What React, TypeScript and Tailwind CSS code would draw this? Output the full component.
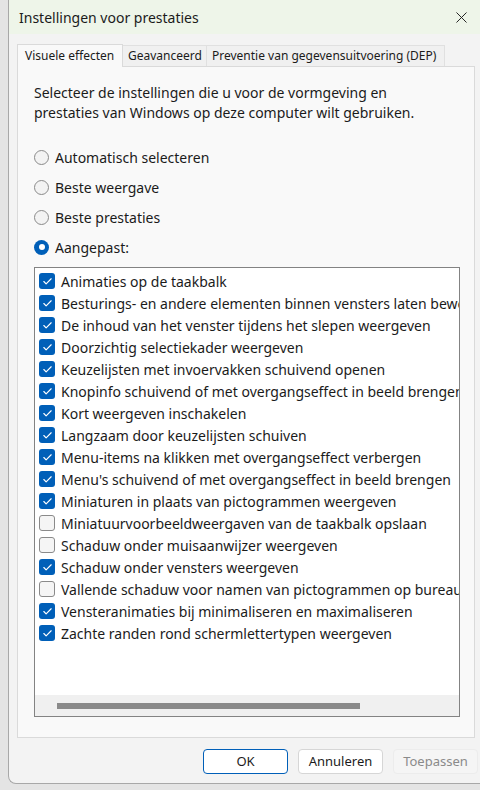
import { Check, X } from 'lucide-react';

const items: [string, boolean][] = [
  ['Animaties op de taakbalk', true],
  ['Besturings- en andere elementen binnen vensters laten bewegen', true],
  ['De inhoud van het venster tijdens het slepen weergeven', true],
  ['Doorzichtig selectiekader weergeven', true],
  ['Keuzelijsten met invoervakken schuivend openen', true],
  ['Knopinfo schuivend of met overgangseffect in beeld brengen', true],
  ['Kort weergeven inschakelen', true],
  ['Langzaam door keuzelijsten schuiven', true],
  ['Menu-items na klikken met overgangseffect verbergen', true],
  ["Menu's schuivend of met overgangseffect in beeld brengen", true],
  ['Miniaturen in plaats van pictogrammen weergeven', true],
  ['Miniatuurvoorbeeldweergaven van de taakbalk opslaan', false],
  ['Schaduw onder muisaanwijzer weergeven', false],
  ['Schaduw onder vensters weergeven', true],
  ['Vallende schaduw voor namen van pictogrammen op bureaublad', false],
  ['Vensteranimaties bij minimaliseren en maximaliseren', true],
  ['Zachte randen rond schermlettertypen weergeven', true],
];

const radios = [
  ['Automatisch selecteren', false],
  ['Beste weergave', false],
  ['Beste prestaties', false],
  ['Aangepast:', true],
] as const;

function Radio({ label, checked }: { label: string; checked: boolean }) {
  return (
    <div className="flex items-center h-[30px] gap-[6px]">
      {checked ? (
        <span className="w-[15px] h-[15px] rounded-full bg-[#005fb8] flex items-center justify-center">
          <span className="w-[6px] h-[6px] rounded-full bg-white" />
        </span>
      ) : (
        <span className="w-[15px] h-[15px] rounded-full border border-[#8a8a8a] bg-[#f3f3f3]" />
      )}
      <span>{label}</span>
    </div>
  );
}

function Row({ label, checked }: { label: string; checked: boolean }) {
  return (
    <div className="flex items-center h-[22px] gap-[6px] whitespace-nowrap">
      {checked ? (
        <span className="w-[16px] h-[16px] shrink-0 rounded-[3px] bg-[#005fb8] flex items-center justify-center text-white">
          <Check size={11} strokeWidth={2.5} />
        </span>
      ) : (
        <span className="w-[16px] h-[16px] shrink-0 rounded-[3px] border border-[#8a8a8a] bg-[#f5f5f5]" />
      )}
      <span>{label}</span>
    </div>
  );
}

export default function App() {
  return (
    <div
      className="w-[480px] h-[790px] overflow-hidden bg-[#e4e4e4] flex pl-[8px] text-[#1b1b1b]"
      style={{ fontFamily: '"Noto Sans", "Open Sans", sans-serif' }}
    >
      <div className="w-[480px] shrink-0 h-[784px] rounded-bl-[8px] border-l border-b border-[#a8a8a8] bg-[#f3f3f3] flex flex-col overflow-hidden">
        {/* title bar */}
        <div className="h-[34px] bg-[#eef5e9] flex items-center pl-[10px]">
          <span className="text-[14px] flex-1">Instellingen voor prestaties</span>
          <X size={19} strokeWidth={1.2} className="mr-[17px]" />
        </div>

        <div className="flex flex-col pl-[8px] pt-[9px]">
          {/* tabs */}
          <div className="flex items-end h-[23px] text-[12px]">
            <div className="h-[23px] w-[106px] pl-[7px] flex items-center bg-[#f9f9f9] border border-b-0 border-[#dadada] relative z-10 -mb-px">
              Visuele effecten
            </div>
            <div className="h-[21px] w-[84px] pl-[5px] flex items-center border border-l-0 border-b-0 border-[#e0e0e0] bg-[#f0f0f0]">
              Geavanceerd
            </div>
            <div className="h-[21px] w-[238px] pl-[5px] flex items-center border border-l-0 border-b-0 border-[#e0e0e0] bg-[#f0f0f0] whitespace-nowrap">
              Preventie van gegevensuitvoering (DEP)
            </div>
          </div>

          {/* panel */}
          <div className="w-[458px] h-[672px] bg-[#f9f9f9] border border-[#dadada] pl-[16px] pt-[16px] text-[14px]">
            <p className="leading-[20px]">
              Selecteer de instellingen die u voor de vormgeving en
              <br />
              prestaties van Windows op deze computer wilt gebruiken.
            </p>
            <div className="mt-[19px] flex flex-col">
              {radios.map(([l, c]) => (
                <Radio key={l} label={l} checked={c} />
              ))}
            </div>
            <div className="mt-[5px] w-[426px] h-[450px] border border-[#838383] bg-white flex flex-col overflow-hidden">
              <div className="flex-1 pt-[2px] pl-[4px] overflow-hidden">
                {items.map(([l, c]) => (
                  <Row key={l} label={l} checked={c} />
                ))}
              </div>
              <div className="h-[21px] bg-[#f0f0f0] flex items-center pl-[22px]">
                <div className="w-[303px] h-[6px] bg-[#8a8a8a]" />
              </div>
            </div>
          </div>

          {/* buttons */}
          <div className="flex gap-[10px] pt-[11px] pl-[186px] text-[13px]">
            <button className="w-[85px] h-[25px] shrink-0 rounded-[4px] border border-[#005fb8] bg-white">OK</button>
            <button className="w-[85px] h-[25px] shrink-0 rounded-[4px] border border-[#d6d6d6] bg-white">Annuleren</button>
            <button className="w-[85px] h-[25px] shrink-0 rounded-[4px] border border-[#ececec] bg-[#f5f5f5] text-[#8a8a8a]">
              Toepassen
            </button>
          </div>
        </div>
      </div>
    </div>
  );
}
